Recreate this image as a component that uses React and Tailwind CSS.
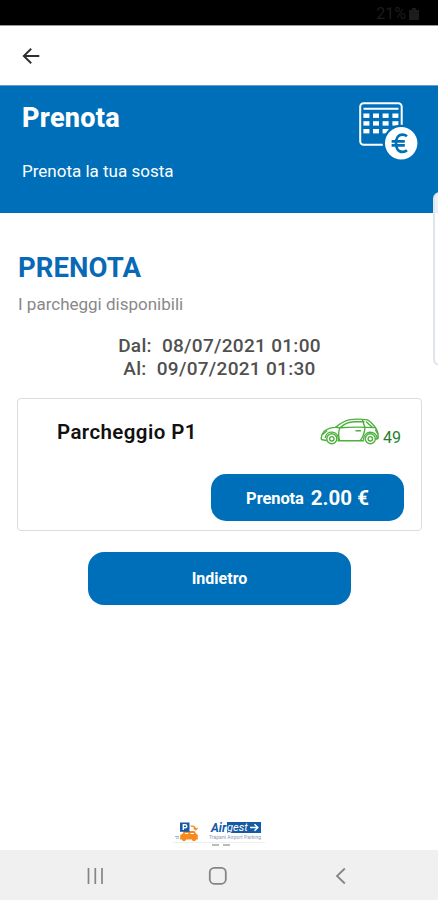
const booking = {
  from: "08/07/2021 01:00",
  to: "09/07/2021 01:30",
};

const parkings = [{ id: "p1", name: "Parcheggio P1", free: 49, price: 2 }];

const BackArrow = () => (
  <svg width="18" height="16" viewBox="0 0 18 16" fill="none" stroke="#2e2e2e" strokeWidth="1.9">
    <path d="M17.3 8H1.8M9.2 .7 1.8 8l7.4 7.3" />
  </svg>
);

const CalendarEuro = () => (
  <svg width="60" height="58" viewBox="0 0 60 58" fill="none">
    <rect x="1.2" y="1.2" width="41.5" height="41.6" rx="3.5" stroke="#fff" strokeWidth="2" />
    <path d="M4.5 6.8h35" stroke="#fff" strokeWidth="2" />
    {[11.5, 19.2, 27].map((y) =>
      [4.4, 14, 23.6, 33.4].map((x) => (
        <rect key={`${x}-${y}`} x={x} y={y} width="6" height="4.4" fill="#fff" />
      ))
    )}
    <circle cx="42.2" cy="41.3" r="18.6" fill="#006fba" />
    <circle cx="42.2" cy="41.3" r="16.2" fill="#fff" />
    <path
      d="M48 34.300c-1.500-1.200-3-1.600-4.600-1.600-4.300 0-6.400 3.800-6.400 8.600s2.100 8.600 6.400 8.600c1.600 0 3.100-.4 4.600-1.600M32.600 39.300h13.200M32.600 43.300h13.200"
      stroke="#006fba"
      strokeWidth="2.7"
    />
  </svg>
);

const Car = () => (
  <svg width="60" height="28" viewBox="0 0 60 28" fill="none" stroke="#4cb03c" strokeWidth="1.4" strokeLinejoin="round" strokeLinecap="round">
    <path d="M6 22.5 1.5 21.5c-.6-2 .3-5.5 3-8.5C8 10.5 11.5 9.6 15.5 9.400 20 5.500 25 2.500 30 1.600c6-.7 12-.5 17.500.3 3.500 2 6.500 5.500 9 9.400 1.500 3 2 6 1.500 9.200l-1.800.7" />
    <path d="M18 22.800h25.500M15.500 9.400l4.500.4M20 9.800c10-.9 26-.7 35.500-.2M20 9.800c-1.500 3-1.900 7-.5 13M20.500 9.500C24.500 5.500 29 4 34 3.800h10M42.500 2.200l2.500 7.500c-.5 5-2 9.500-4.800 13M46.500 4l5.500 5M36 12.700h4.500M2.500 16.500 6.800 13M55.500 12l2 3.500" />
    <path d="M5.300 19.500c1.300-7.500 12.700-7.500 13.200 2.300M43.500 21.500c.2-9.500 13.200-9.500 13.700-1" />
    <circle cx="11.8" cy="20.8" r="5" />
    <circle cx="11.8" cy="20.8" r="2.2" />
    <circle cx="50.3" cy="20.8" r="5" />
    <circle cx="50.3" cy="20.8" r="2.2" />
  </svg>
);

const ParkingLogo = () => (
  <svg width="27" height="20" viewBox="0 0 27 20">
    <path d="M10 9h10.500l1.800 3 1.500.8v4.700H6l.4-4.800 2-.7z" fill="#f58b20" />
    <path d="M16.500 4.200h2c2 .3 3 1.500 3.200 3.500M19.800 6l1.900 2 1.900-2" fill="none" stroke="#f58b20" strokeWidth="1.2" />
    <path d="M11 11.500h3.200M16.500 11.500h3.500" stroke="#fff" strokeWidth="1.2" />
    <circle cx="10" cy="17.3" r="2" fill="#f58b20" />
    <circle cx="20" cy="17.300" r="2" fill="#f58b20" />
    <rect x="6" y=".5" width="9.500" height="9.300" fill="#155aa5" />
    <path d="M9.300 8V2.700h1.800c2.300 0 2.300 3.100 0 3.100H9.400" fill="none" stroke="#fff" strokeWidth="1.4" />
    <path d="M1 14.500h4M2 16.200h3" stroke="#8eabd0" strokeWidth=".9" />
  </svg>
);

const Airgest = () => (
  <div className="flex w-[54px] flex-col">
    <div className="ml-[2px] flex h-[11px] items-center text-[12px] leading-none font-bold italic text-[#155aa5]">
      <span className="w-[16px]">Air</span>
      <span className="flex h-[11px] w-[34px] items-center bg-[#155aa5] text-[11px] text-white">
        <span className="w-[23px] font-normal">gest</span>
        <svg width="9" height="9" viewBox="0 0 9 9" fill="none" stroke="#fff" strokeWidth="1.5">
          <path d="M0 4.500h7.500M4.500 1.300l3.300 3.200-3.300 3.200" />
        </svg>
      </span>
    </div>
    <div className="mt-[2px] text-[5.1px] leading-[5px] whitespace-nowrap text-[#8c9ab5]">
      Trapani Airport Parking
    </div>
  </div>
);

const ParkingCard = ({ parking }) => (
  <div className="flex h-[133px] flex-col rounded-[4px] border border-[#dcdcdc] pr-[17px] pl-[39px]">
    <div className="flex h-[63px] items-start justify-between">
      <h3 className="mt-[19px] text-[20.5px] leading-7 font-semibold tracking-[0.4px] text-[#111]">
        {parking.name}
      </h3>
      <div className="mt-[19px] mr-[3px] flex items-start gap-[3px]">
        <Car />
        <span className="mt-[10px] text-[16px] leading-5 text-[#277d2c]">{parking.free}</span>
      </div>
    </div>
    <button className="mt-[12px] flex h-[47px] w-[193px] items-center justify-center gap-[7px] self-end rounded-[15px] bg-[#006fba] text-white">
      <span className="mt-[3px] text-[16.5px] font-bold tracking-[-0.1px]">Prenota</span>
      <span className="mt-[2px] text-[20.5px] font-bold">{parking.price.toFixed(2)} €</span>
    </button>
  </div>
);

export default function App() {
  return (
    <div className="relative flex h-[900px] w-[438px] flex-col overflow-hidden bg-white font-['Roboto',sans-serif]">
      {/* Status bar */}
      <div className="flex h-[25px] items-center justify-end gap-[3px] bg-black pt-[3px] pr-[19px] text-[16px] text-[#1c1c1c]">
        <span>21%</span>
        <svg width="10" height="12" viewBox="0 0 10 12" fill="#1c1c1c">
          <path d="M3 0h4v2h3v10H0V2h3z" />
        </svg>
      </div>

      {/* App bar */}
      <div className="flex h-[60px] items-center border-t border-[#999] pl-[22px]">
        <BackArrow />
      </div>

      <header className="flex h-[128px] justify-between border-t border-[#6d9cc2] bg-[#006fba] pr-[19px] pl-[22px] text-white">
        <div>
          <h1 className="mt-[14px] text-[27px] leading-9 font-extrabold tracking-[0.3px]">Prenota</h1>
          <p className="mt-[23px] text-[17px] leading-6">Prenota la tua sosta</p>
        </div>
        <div className="mt-[16px]">
          <CalendarEuro />
        </div>
      </header>

      <main className="flex flex-1 flex-col pr-[16px] pl-[17px]">
        <h2 className="mt-[37px] pl-px text-[27.5px] leading-9 font-bold tracking-[0.1px] text-[#0969b5]">PRENOTA</h2>
        <p className="mt-[6px] pl-px text-[17px] leading-6 text-[#888]">I parcheggi disponibili</p>

        <div className="mt-[18px] flex flex-col items-center text-[19px] leading-[23px] font-medium tracking-[0.3px] whitespace-pre text-[#505050]">
          <div>Dal:  {booking.from}</div>
          <div>Al:  {booking.to}</div>
        </div>

        <div className="mt-[18px] flex flex-col gap-3">
          {parkings.map((p) => (
            <ParkingCard key={p.id} parking={p} />
          ))}
        </div>

        <button className="mt-[21px] h-[53px] w-[263px] self-center rounded-[16px] bg-[#006fba] text-[16px] font-bold text-white">
          Indietro
        </button>
      </main>

      <footer className="flex h-[28px] flex-col items-center">
        <div className="flex h-[20px] items-start gap-[8px] pr-[1px]">
          <ParkingLogo />
          <Airgest />
        </div>
        <div className="h-px w-[92px] bg-[#eeeeee]" />
        <div className="mt-px flex gap-[4px] pl-[3px]">
          <span className="h-[2px] w-[7px] bg-[#bbb]" />
          <span className="h-[2px] w-[7px] bg-[#bbb]" />
        </div>
      </footer>

      {/* Android navigation */}
      <nav className="flex h-[50px] items-center bg-[#f0f0f0] pt-[2px] pl-[86px]">
        <svg width="18" height="18" viewBox="0 0 18 18" stroke="#858585" strokeWidth="1.7">
          <path d="M2.500 1v16M9.300 1v16M16 1v16" />
        </svg>
        <svg className="ml-[104px]" width="20" height="20" viewBox="0 0 20 20" fill="none" stroke="#858585" strokeWidth="1.8">
          <rect x="1.8" y="1.8" width="16" height="16" rx="4.5" />
        </svg>
        <svg className="ml-[107px]" width="12" height="18" viewBox="0 0 12 18" fill="none" stroke="#858585" strokeWidth="1.8">
          <path d="M9.800 1.500 2 9l7.800 7.500" />
        </svg>
      </nav>

      {/* Edge panel handle */}
      <div className="absolute top-[192px] -right-[8px] h-[174px] w-[13px] rounded-[8px] border-2 border-[#dfe5ea] bg-white/90" />
    </div>
  );
}
